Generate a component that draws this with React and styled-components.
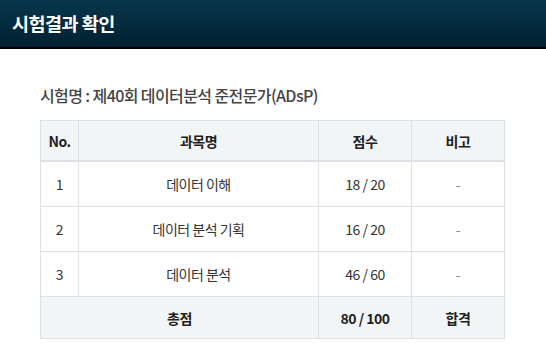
import React from 'react'
import styled, { createGlobalStyle } from 'styled-components'

const rows = [
  { no: 1, subject: '데이터 이해', score: '18 / 20', note: '-' },
  { no: 2, subject: '데이터 분석 기획', score: '16 / 20', note: '-' },
  { no: 3, subject: '데이터 분석', score: '46 / 60', note: '-' },
]

const App = () => (
  <>
    <GlobalStyle />
    <Header>
      <Title>시험결과 확인</Title>
    </Header>
    <Content>
      <ExamName>시험명 : 제40회 데이터분석 준전문가(ADsP)</ExamName>
      <Table>
        <colgroup>
          <col style={{ width: 38 }} />
          <col style={{ width: 240 }} />
          <col style={{ width: 93 }} />
          <col style={{ width: 93 }} />
        </colgroup>
        <thead>
          <tr>
            <Th>No.</Th>
            <Th>과목명</Th>
            <Th>점수</Th>
            <Th>비고</Th>
          </tr>
        </thead>
        <tbody>
          {rows.map((row) => (
            <tr key={row.no}>
              <Td>{row.no}</Td>
              <Td>{row.subject}</Td>
              <Td>{row.score}</Td>
              <Td $muted>{row.note}</Td>
            </tr>
          ))}
        </tbody>
        <tfoot>
          <tr>
            <FootCell colSpan={2}>총점</FootCell>
            <FootCell>80 / 100</FootCell>
            <FootCell>합격</FootCell>
          </tr>
        </tfoot>
      </Table>
    </Content>
  </>
)

const GlobalStyle = createGlobalStyle`
  body {
    margin: 0;
    background: #fff;
    font-family: "Noto Sans CJK KR", "Noto Sans", sans-serif;
  }
`

const Header = styled.header`
  background: linear-gradient(to bottom, #07364b, #022031);
  border-bottom: 2px solid #000;
  display: flex;
  align-items: center;
  height: 47px;
  padding: 0 12px;
`

const Title = styled.h1`
  color: #fff;
  font-size: 18.5px;
  font-weight: 700;
  letter-spacing: -0.5px;
  margin: 0;
  padding-bottom: 2px;
`

const Content = styled.main`
  padding: 31px 42px 0 40px;
`

const ExamName = styled.h2`
  color: #444;
  font-size: 16px;
  font-weight: 500;
  letter-spacing: -0.6px;
  line-height: 30px;
  margin: 0 0 10px;
`

const Table = styled.table`
  border-collapse: collapse;
  table-layout: fixed;
  width: 465px;
  font-size: 14px;
  color: #333;
`

const Th = styled.th`
  background: #f2f5f6;
  border: 1px solid #dde0e5;
  border-bottom: 2px solid #dde0e5;
  color: #222;
  font-weight: 700;
  height: 39px;
  padding: 0;
  text-align: center;
  letter-spacing: -0.5px;
`

const Td = styled.td`
  border: 1px solid #dde0e5;
  color: ${({ $muted }) => ($muted ? '#888' : '#333')};
  height: 44px;
  padding: 0;
  text-align: center;
  letter-spacing: -0.5px;
`

const FootCell = styled.td`
  background: #f2f5f6;
  border: 1px solid #dde0e5;
  color: #222;
  font-weight: 700;
  height: 41px;
  padding: 0;
  text-align: center;
  letter-spacing: -0.5px;
`

export default App
